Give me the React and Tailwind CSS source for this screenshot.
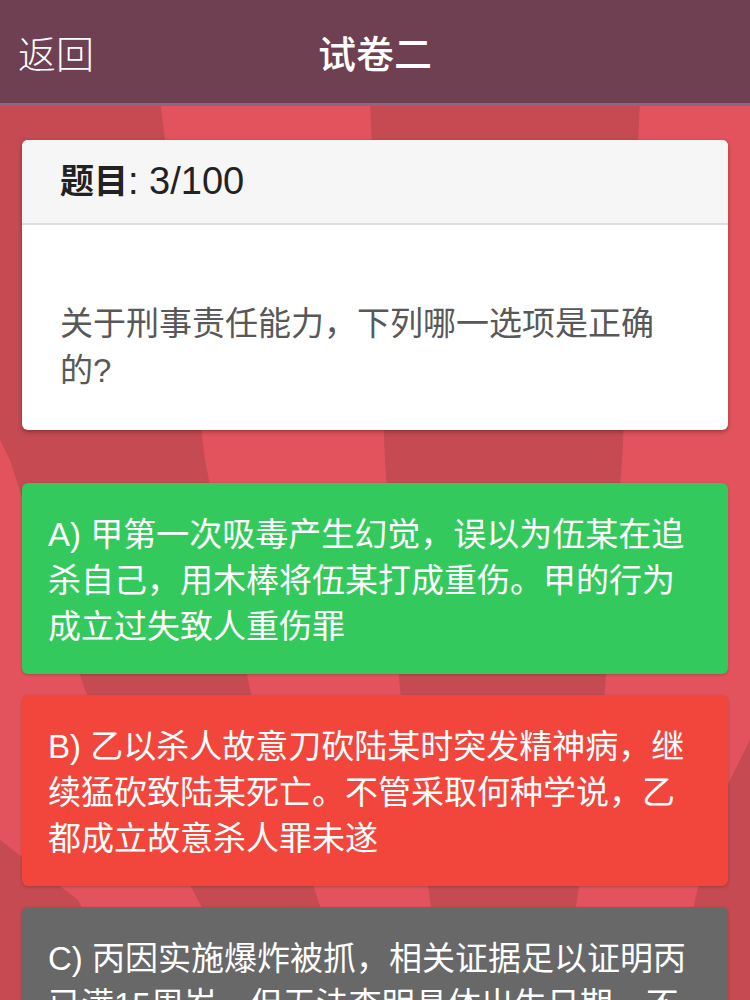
const options = [
  {
    key: "A",
    text: "甲第一次吸毒产生幻觉，误以为伍某在追杀自己，用木棒将伍某打成重伤。甲的行为成立过失致人重伤罪",
    color: "bg-[#34c95d]",
  },
  {
    key: "B",
    text: "乙以杀人故意刀砍陆某时突发精神病，继续猛砍致陆某死亡。不管采取何种学说，乙都成立故意杀人罪未遂",
    color: "bg-[#f2463c]",
  },
  {
    key: "C",
    text: "丙因实施爆炸被抓，相关证据足以证明丙已满15周岁，但无法查明具体出生日期，不能排除丙行为时未满16周岁，对丙只能以爆炸罪追究刑事责任",
    color: "bg-[#686868]",
  },
  {
    key: "D",
    text: "丁在严重醉酒状态下盗窃他人财物，醉酒时丧失了辨认控制能力，对丁不能追究刑事责任",
    color: "bg-[#686868]",
  },
];

// darker rays of the swirl behind the cards
const rays = [
  "370,100 640,100 622,460 605,690 577,900 562,1000 447,1000 430,900 400,690 385,460",
  "0,100 160,100 205,460 250,690 318,900 350,1000 252,1000 198,900 85,690 10,460 0,440",
  "0,840 78,900 128,1000 0,1000",
  "750,740 720,800 695,900 680,1000 750,1000",
];

function Backdrop() {
  return (
    <svg
      className="absolute inset-0 w-full h-full"
      viewBox="0 0 750 1000"
      preserveAspectRatio="none"
    >
      <rect width="750" height="1000" fill="#e2535d" />
      {rays.map((p, i) => (
        <polygon key={i} points={p} fill="#c54a51" />
      ))}
    </svg>
  );
}

export default function App() {
  return (
    <div className="relative h-[1000px] overflow-hidden flex flex-col font-[family-name:'Liberation_Sans','Noto_Sans_CJK_SC',sans-serif]">
      <Backdrop />

      <div className="relative z-10 h-[106px] shrink-0 pt-[6px] bg-[#6e4051] border-b-[3px] border-[#8a6584] flex items-center">
        <button className="pl-[18px] text-[38px] font-light text-white leading-none">
          返回
        </button>
        <h1 className="absolute left-0 right-0 text-center text-[38px] font-medium text-white leading-none pointer-events-none">
          试卷二
        </h1>
      </div>

      <div className="relative z-10 flex-1 px-[22px] pt-[34px]">
        <div className="rounded-[6px] overflow-hidden bg-white shadow-[0_2px_4px_rgba(0,0,0,0.3)]">
          <div className="h-[85px] bg-[#f6f6f7] border-b-2 border-[#dddddd] flex items-center pl-[38px] text-[#222]">
            <span className="text-[34px] font-semibold">题目</span>
            <span className="text-[38px] font-medium">: 3/100</span>
          </div>
          <div className="pl-[38px] pr-[57px] pt-[75px] pb-[36px] text-[33px] leading-[47px] text-[#585858]">
            关于刑事责任能力，下列哪一选项是正确的?
          </div>
        </div>

        <div className="mt-[53px] flex flex-col gap-[21px]">
          {options.map((o) => (
            <div
              key={o.key}
              className={`${o.color} rounded-[6px] pl-[26px] pr-[29px] pt-[29px] pb-[24px] text-[33px] leading-[46px] text-white shadow-[0_1px_3px_rgba(0,0,0,0.2)]`}
            >
              {o.key}) {o.text}
            </div>
          ))}
        </div>
      </div>
    </div>
  );
}
